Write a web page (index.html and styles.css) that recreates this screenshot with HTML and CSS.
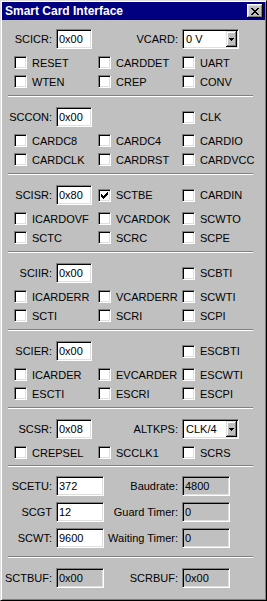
FILE: index.html
```html
<!DOCTYPE html>
<html lang="en">
  <head>
    <meta charset="UTF-8" />
    <meta name="viewport" content="width=device-width, initial-scale=1.0" />
    <title>Smart Card Interface</title>
    <link rel="stylesheet" href="styles.css">
  </head>
  <body>
    <div class="win">
      <div class="title">
        <span>Smart Card Interface</span>
        <a href="javascript:;" class="close">
          <svg width="8" height="7" viewBox="0 0 8 7"><path d="M0 0h2v1h-2z M6 0h2v1h-2z M1 1h2v1h-2z M5 1h2v1h-2z M2 2h4v1h-4z M3 3h2v1h-2z M2 4h4v1h-4z M1 5h2v1h-2z M5 5h2v1h-2z M0 6h2v1h-2z M6 6h2v1h-2z" fill="#000"/></svg>
        </a>
      </div>

      <!-- SCICR -->
      <div class="sec first">
        <div class="top">
          <div class="head"><label>SCICR:</label><input class="edit" value="0x00"></div>
          <div class="rlabel">VCARD:</div>
          <div class="combo"><span>0 V</span><i class="drop"><svg width="5" height="3" viewBox="0 0 5 3"><path d="M0 0h5v1h-5z M1 1h3v1h-3z M2 2h1v1h-1z" fill="#000"/></svg></i></div>
        </div>
        <div class="boxes">
          <label class="chk"><span class="cb"></span>RESET</label>
          <label class="chk"><span class="cb"></span>CARDDET</label>
          <label class="chk"><span class="cb"></span>UART</label>
          <label class="chk"><span class="cb"></span>WTEN</label>
          <label class="chk"><span class="cb"></span>CREP</label>
          <label class="chk"><span class="cb"></span>CONV</label>
        </div>
      </div>
      <div class="sep"></div>

      <!-- SCCON -->
      <div class="sec">
        <div class="top">
          <div class="head"><label>SCCON:</label><input class="edit" value="0x00"></div>
          <label class="chk c3"><span class="cb"></span>CLK</label>
        </div>
        <div class="boxes">
          <label class="chk"><span class="cb"></span>CARDC8</label>
          <label class="chk"><span class="cb"></span>CARDC4</label>
          <label class="chk"><span class="cb"></span>CARDIO</label>
          <label class="chk"><span class="cb"></span>CARDCLK</label>
          <label class="chk"><span class="cb"></span>CARDRST</label>
          <label class="chk"><span class="cb"></span>CARDVCC</label>
        </div>
      </div>
      <div class="sep"></div>

      <!-- SCISR -->
      <div class="sec">
        <div class="top">
          <div class="head"><label>SCISR:</label><input class="edit" value="0x80"></div>
          <label class="chk"><span class="cb"><svg width="7" height="7" viewBox="0 0 7 7"><path d="M6 0h1v1h-1z M5 1h2v1h-2z M0 2h1v1h-1z M4 2h3v1h-3z M0 3h2v1h-2z M3 3h3v1h-3z M0 4h5v1h-5z M1 5h3v1h-3z M2 6h1v1h-1z" fill="#000"/></svg></span>SCTBE</label>
          <label class="chk"><span class="cb"></span>CARDIN</label>
        </div>
        <div class="boxes">
          <label class="chk"><span class="cb"></span>ICARDOVF</label>
          <label class="chk"><span class="cb"></span>VCARDOK</label>
          <label class="chk"><span class="cb"></span>SCWTO</label>
          <label class="chk"><span class="cb"></span>SCTC</label>
          <label class="chk"><span class="cb"></span>SCRC</label>
          <label class="chk"><span class="cb"></span>SCPE</label>
        </div>
      </div>
      <div class="sep"></div>

      <!-- SCIIR -->
      <div class="sec">
        <div class="top">
          <div class="head"><label>SCIIR:</label><input class="edit" value="0x00"></div>
          <label class="chk c3"><span class="cb"></span>SCBTI</label>
        </div>
        <div class="boxes">
          <label class="chk"><span class="cb"></span>ICARDERR</label>
          <label class="chk"><span class="cb"></span>VCARDERR</label>
          <label class="chk"><span class="cb"></span>SCWTI</label>
          <label class="chk"><span class="cb"></span>SCTI</label>
          <label class="chk"><span class="cb"></span>SCRI</label>
          <label class="chk"><span class="cb"></span>SCPI</label>
        </div>
      </div>
      <div class="sep"></div>

      <!-- SCIER -->
      <div class="sec">
        <div class="top">
          <div class="head"><label>SCIER:</label><input class="edit" value="0x00"></div>
          <label class="chk c3"><span class="cb"></span>ESCBTI</label>
        </div>
        <div class="boxes">
          <label class="chk"><span class="cb"></span>ICARDER</label>
          <label class="chk"><span class="cb"></span>EVCARDER</label>
          <label class="chk"><span class="cb"></span>ESCWTI</label>
          <label class="chk"><span class="cb"></span>ESCTI</label>
          <label class="chk"><span class="cb"></span>ESCRI</label>
          <label class="chk"><span class="cb"></span>ESCPI</label>
        </div>
      </div>
      <div class="sep"></div>

      <!-- SCSR -->
      <div class="sec short">
        <div class="top">
          <div class="head"><label>SCSR:</label><input class="edit" value="0x08"></div>
          <div class="rlabel">ALTKPS:</div>
          <div class="combo"><span>CLK/4</span><i class="drop"><svg width="5" height="3" viewBox="0 0 5 3"><path d="M0 0h5v1h-5z M1 1h3v1h-3z M2 2h1v1h-1z" fill="#000"/></svg></i></div>
        </div>
        <div class="boxes">
          <label class="chk"><span class="cb"></span>CREPSEL</label>
          <label class="chk"><span class="cb"></span>SCCLK1</label>
          <label class="chk"><span class="cb"></span>SCRS</label>
        </div>
      </div>
      <div class="sep"></div>

      <!-- timing -->
      <div class="sec timing">
        <div class="pairs">
          <label>SCETU:</label><input class="edit wide" value="372">
          <label>Baudrate:</label><input class="edit wide off" value="4800" readonly>
          <label>SCGT</label><input class="edit wide" value="12">
          <label>Guard Timer:</label><input class="edit wide off" value="0" readonly>
          <label>SCWT:</label><input class="edit wide" value="9600">
          <label>Waiting Timer:</label><input class="edit wide off" value="0" readonly>
        </div>
      </div>
      <div class="sep"></div>

      <!-- buffers -->
      <div class="sec">
        <div class="pairs">
          <label>SCTBUF:</label><input class="edit wide off" value="0x00" readonly>
          <label>SCRBUF:</label><input class="edit wide off" value="0x00" readonly>
        </div>
      </div>
    </div>
  </body>
</html>
```

FILE: styles.css
```css
* {
  margin: 0;
  padding: 0;
  box-sizing: border-box;
}

body {
  width: 267px;
  height: 601px;
  background-color: #c0c0c0;
  font-family: "Liberation Sans", Arial, sans-serif;
  font-size: 11px;
  color: #000;
}

.win {
  width: 267px;
  height: 601px;
  padding: 1px;
  border: 1px solid;
  border-color: #dfdfdf #000 #000 #dfdfdf;
  box-shadow: inset 1px 1px #fff, inset -1px -1px #808080;
  background-color: #c0c0c0;
}

/* title bar */
.title {
  display: flex;
  justify-content: space-between;
  align-items: center;
  height: 18px;
  padding: 0 2px 0 3px;
  background-color: #000080;
  color: #fff;
  font-size: 12px;
  font-weight: bold;
  white-space: nowrap;
}

.close {
  display: flex;
  justify-content: center;
  align-items: center;
  width: 16px;
  height: 14px;
  padding-right: 1px;
  background-color: #c0c0c0;
  box-shadow: inset -1px -1px #000, inset 1px 1px #fff, inset -2px -2px #808080, inset 2px 2px #dfdfdf;
}

/* sections */
.sec {
  padding: 10px 0 4px;
}

.sec.first {
  padding-top: 9px;
}

.sec.short {
  padding-bottom: 3px;
}

.sec.timing {
  padding: 9px 0 8px;
}

.sep {
  height: 2px;
  margin: 0 12px 0 6px;
  border-top: 1px solid #808080;
  border-bottom: 1px solid #fff;
}

.top {
  display: grid;
  grid-template-columns: 96px 84px 1fr;
  align-items: center;
  height: 20px;
}

.top .c3 {
  grid-column: 3;
}

.head {
  display: flex;
  align-items: center;
}

.head label {
  width: 50px;
  margin-right: 4px;
  text-align: right;
  white-space: nowrap;
}

.rlabel {
  padding-right: 4px;
  text-align: right;
  white-space: nowrap;
}

.boxes {
  display: grid;
  grid-template-columns: 84px 84px 1fr;
  grid-auto-rows: 19px;
  align-items: center;
  margin-top: 4px;
  padding-left: 12px;
}

/* controls */
.edit {
  width: 36px;
  height: 20px;
  padding: 0 2px;
  border: 1px solid;
  border-color: #808080 #fff #fff #808080;
  box-shadow: inset 1px 1px #000, inset -1px -1px #dfdfdf;
  background-color: #fff;
  font: inherit;
  color: #000;
  outline: none;
}

.edit.wide {
  width: 48px;
}

.edit.off {
  background-color: #c0c0c0;
}

.chk {
  display: flex;
  align-items: center;
  gap: 5px;
  white-space: nowrap;
}

.cb {
  display: flex;
  justify-content: center;
  align-items: center;
  flex: none;
  width: 13px;
  height: 13px;
  border: 1px solid;
  border-color: #808080 #fff #fff #808080;
  box-shadow: inset 1px 1px #000, inset -1px -1px #dfdfdf;
  background-color: #fff;
}

.combo {
  display: flex;
  align-items: center;
  width: 57px;
  height: 20px;
  padding: 1px;
  border: 1px solid;
  border-color: #808080 #fff #fff #808080;
  box-shadow: inset 1px 1px #000, inset -1px -1px #dfdfdf;
  background-color: #fff;
}

.combo span {
  flex: 1;
  padding-left: 2px;
  white-space: nowrap;
}

.drop {
  display: flex;
  justify-content: center;
  align-items: center;
  width: 11px;
  height: 16px;
  background-color: #c0c0c0;
  box-shadow: inset -1px -1px #000, inset 1px 1px #dfdfdf, inset -2px -2px #808080, inset 2px 2px #fff;
}

.pairs {
  display: grid;
  grid-template-columns: 50px 48px 70px 48px;
  grid-auto-rows: 20px;
  column-gap: 4px;
  row-gap: 6px;
  align-items: center;
}

.pairs label {
  text-align: right;
  white-space: nowrap;
}
```
